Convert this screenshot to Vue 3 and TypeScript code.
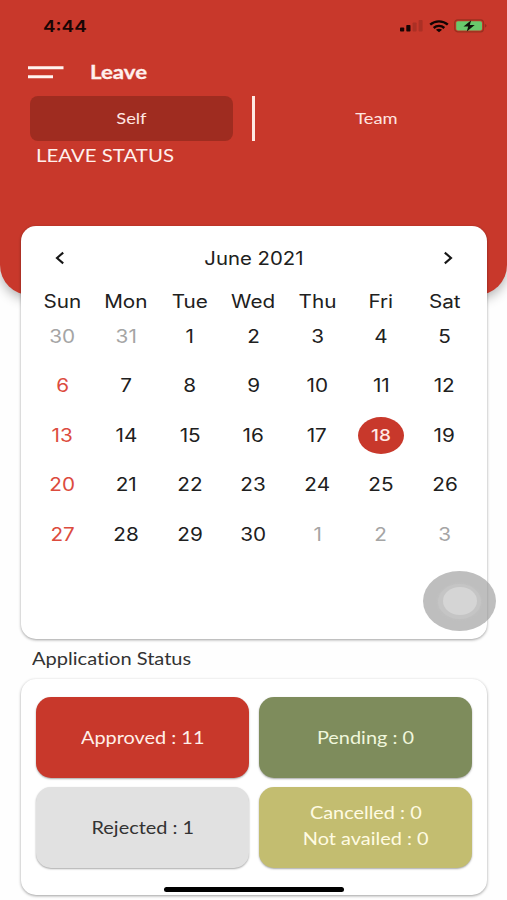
<script setup lang="ts">
interface Day {
  n: number
  kind: 'normal' | 'sunday' | 'outside' | 'selected'
}

const weekdays: string[] = ['Sun', 'Mon', 'Tue', 'Wed', 'Thu', 'Fri', 'Sat']

const days: Day[] = Array.from({ length: 35 }, (_, i): Day => {
  if (i < 2) return { n: 30 + i, kind: 'outside' }
  const n = i - 1
  if (n > 30) return { n: n - 30, kind: 'outside' }
  if (n === 18) return { n, kind: 'selected' }
  return { n, kind: i % 7 === 0 ? 'sunday' : 'normal' }
})

const tiles: { name: string; lines: string[] }[] = [
  { name: 'approved', lines: ['Approved : 11'] },
  { name: 'pending', lines: ['Pending : 0'] },
  { name: 'rejected', lines: ['Rejected : 1'] },
  { name: 'cancelled', lines: ['Cancelled : 0', 'Not availed : 0'] },
]
</script>

<template>
  <div class="screen">
    <header class="hero">
      <div class="statusbar">
        <span class="time">4:44</span>
        <div class="indicators">
          <svg class="signal" width="23" height="12" viewBox="0 0 23 12">
            <rect x="0" y="7.5" width="4.2" height="4" rx="0.8" />
            <rect x="6.3" y="5" width="4.2" height="6.5" rx="0.8" />
            <rect x="12.6" y="2.5" width="4" height="9" rx="0.8" opacity="0.16" />
            <rect x="18.6" y="0" width="4" height="11.5" rx="0.8" opacity="0.16" />
          </svg>
          <svg class="wifi" width="20" height="13" viewBox="0 0 20 13">
            <g fill="none" stroke="#100403" stroke-width="2.4">
              <path d="M1.2 4.6C6.1 .3 13.9 .3 18.8 4.6" />
              <path d="M4.7 8C7.7 5.2 12.3 5.2 15.3 8" />
            </g>
            <path d="M10 12.3L6.9 9.8Q10 7.7 13.1 9.8Z" fill="#100403" />
          </svg>
          <svg class="battery" width="33" height="14" viewBox="0 0 33 14">
            <rect x="0.7" y="0.8" width="28.8" height="12" rx="3" fill="none" stroke="#98301f" stroke-width="1.2" />
            <rect x="2.2" y="2.2" width="25.8" height="9.2" rx="1.6" fill="#69c96c" />
            <path d="M30.8 4.8Q32.6 5.6 32.6 6.8T30.8 8.8Z" fill="#98301f" />
            <path d="M17.2 1.3L9.5 7.6H14.2L12.8 12.4L20.7 6.1H15.8Z" fill="#10120a" />
          </svg>
        </div>
      </div>
      <div class="titlebar">
        <svg class="menu" width="36" height="14" viewBox="0 0 36 14">
          <path d="M0 1.7H35.5M0 10.8H25" stroke="#fff4f1" stroke-width="3" />
        </svg>
        <h1 class="title">Leave</h1>
      </div>
      <nav class="tabs">
        <button class="tab active"><span>Self</span></button>
        <i class="divider"></i>
        <button class="tab"><span>Team</span></button>
      </nav>
      <p class="section">LEAVE STATUS</p>
    </header>

    <section class="card calendar">
      <div class="month">
        <svg width="10" height="14" viewBox="0 0 10 14"><path d="M8.2 1.6L2 7L8.2 12.4" /></svg>
        <span class="month-name">June 2021</span>
        <svg width="10" height="14" viewBox="0 0 10 14"><path d="M1.8 1.6L8 7L1.8 12.4" /></svg>
      </div>
      <div class="grid weekdays">
        <span v-for="w in weekdays" :key="w" class="cell"><b class="wide">{{ w }}</b></span>
      </div>
      <div class="grid dates">
        <span v-for="(d, i) in days" :key="i" class="cell" :class="d.kind"><b class="wide">{{ d.n }}</b></span>
      </div>
    </section>

    <h2 class="heading">Application Status</h2>

    <section class="card stats">
      <div v-for="t in tiles" :key="t.name" class="tile" :class="t.name">
        <span v-for="l in t.lines" :key="l">{{ l }}</span>
      </div>
    </section>

    <div class="assistive"><i class="ring"><i class="core"></i></i></div>
    <div class="home"></div>
  </div>
</template>

<style>
body {
  background: #fefefe;
}
</style>

<style scoped>
.screen {
  position: relative;
  width: 507px;
  height: 900px;
  overflow: hidden;
  background: #fefefe;
  font-family: Lato, 'Open Sans', sans-serif;
  font-variant-ligatures: none;
  color: #333;
}
.hero {
  box-sizing: border-box;
  height: 295px;
  padding-top: 16px;
  background: #c8382b;
  border-radius: 0 0 30px 30px;
  box-shadow: 0 4px 12px rgba(0, 0, 0, 0.3);
  color: #fff0ed;
}
.statusbar {
  display: flex;
  justify-content: space-between;
  align-items: center;
  height: 20px;
  padding: 0 20px 0 42.5px;
}
.time {
  font: 600 16px/20px Inter, sans-serif;
  color: #180504;
  transform: scaleX(1.18);
  transform-origin: left;
}
.indicators {
  display: flex;
  align-items: center;
}
.signal { fill: #180504; margin-right: 6px; }
.wifi { margin-right: 5px; }
.titlebar {
  display: flex;
  align-items: center;
  box-sizing: border-box;
  height: 36px;
  margin-top: 18px;
  padding: 2px 28px 0;
}
.menu { margin-right: 26px; }
.title {
  margin: -2px 0 0;
  font-size: 19px;
  line-height: 24px;
  font-weight: 700;
  -webkit-text-stroke: 0.3px currentColor;
  transform: scaleX(1.17);
  transform-origin: left;
}
.tabs {
  display: flex;
  height: 45px;
  margin: 6px 29px 0 30px;
}
.tab {
  flex: 1;
  border: 0;
  padding: 0 0 2px;
  border-radius: 8px;
  background: transparent;
  font: 400 15px/20px Lato, sans-serif;
  color: #ffe5e0;
}
.tab span {
  display: inline-block;
  transform: scaleX(1.22);
}
.active { background: #9f2c20; }
.divider {
  width: 3px;
  margin: 0 20px 0 19px;
  background: #ffe9e3;
}
.section {
  margin: 4px 0 0 36px;
  width: max-content;
  font-size: 17px;
  line-height: 22px;
  transform: scaleX(1.2);
  transform-origin: left;
}
.card {
  box-sizing: border-box;
  width: 466px;
  margin: 0 0 0 21px;
  background: #fff;
  border-radius: 15px;
  box-shadow: 0 1px 3px rgba(0, 0, 0, 0.38);
}
.calendar {
  position: relative;
  height: 413px;
  margin-top: -69px;
  padding: 14px 10.5px 0 9.5px;
  font: 400 18px/20px Inter, sans-serif;
  color: #202020;
}
.month {
  display: flex;
  justify-content: space-between;
  align-items: center;
  height: 36px;
  padding: 0 24px;
}
.month svg {
  fill: none;
  stroke: #161616;
  stroke-width: 2.1;
}
.month-name {
  padding-top: 1px;
  transform: scaleX(1.13);
}
.grid {
  display: grid;
  grid-template-columns: repeat(7, 1fr);
}
.weekdays { margin-top: 7px; }
.weekdays .cell {
  height: 36px;
  padding-top: 1px;
  box-sizing: border-box;
}
.dates { grid-auto-rows: 49.5px; }
.dates .cell { height: 35px; }
.cell {
  display: flex;
  align-items: center;
  justify-content: center;
}
.wide {
  font-weight: 400;
  transform: scaleX(1.15);
}
.outside { color: #a5a5a5; }
.sunday { color: #dc4b3e; }
.selected { color: #ffe9e4; }
.selected .wide {
  flex: none;
  width: 40px;
  height: 37px;
  font-size: 16.5px;
  font-weight: 500;
  line-height: 37px;
  text-align: center;
  border-radius: 50%;
  background: #c8382b;
}
.heading {
  width: max-content;
  margin: 8px 0 9px 32px;
  font-size: 17px;
  line-height: 23px;
  font-weight: 400;
  transform: scaleX(1.18);
  transform-origin: left;
}
.stats {
  display: grid;
  grid-template-columns: 213px 213px;
  grid-template-rows: 81px 81px;
  gap: 9px 10px;
  height: 216px;
  padding: 18px 15px;
}
.tile {
  display: flex;
  flex-direction: column;
  align-items: center;
  justify-content: center;
  border-radius: 15px;
  box-shadow: 0 1px 2px rgba(0, 0, 0, 0.35);
  font-size: 17px;
  line-height: 26px;
  color: #fff0e9;
}
.tile span { transform: scaleX(1.17); }
.approved { background: #c8382b; }
.pending { background: #7e8c5c; color: #f0f7dc; }
.rejected { background: #e1e1e1; color: #333; }
.cancelled { background: #c3bd70; color: #fffbe2; padding-bottom: 4px; box-sizing: border-box; }
.assistive {
  position: absolute;
  left: 423px;
  top: 571px;
  width: 73px;
  height: 60px;
  display: flex;
  align-items: center;
  justify-content: center;
  border-radius: 50%;
  background: rgba(150, 150, 150, 0.62);
}
.ring {
  display: flex;
  align-items: center;
  justify-content: center;
  width: 43px;
  height: 35px;
  border-radius: 50%;
  background: #c5c5c5;
  box-shadow: 0 0 3px 1px #c1c1c1;
}
.core {
  width: 34px;
  height: 28px;
  border-radius: 50%;
  background: #d5d5d5;
}
.home {
  position: absolute;
  left: 164px;
  top: 887px;
  width: 180px;
  height: 5px;
  border-radius: 3px;
  background: #000;
}
</style>
